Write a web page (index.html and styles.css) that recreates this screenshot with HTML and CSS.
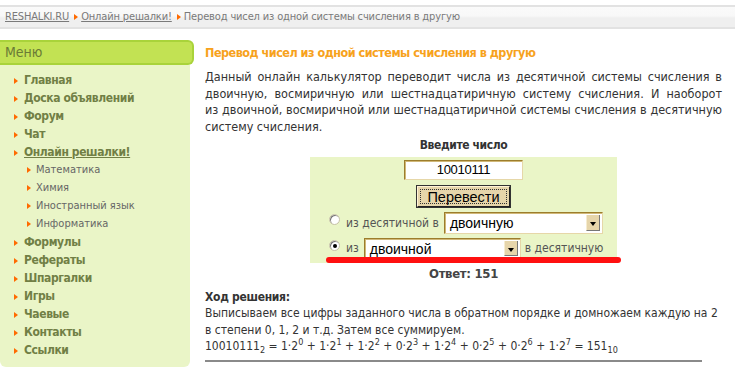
FILE: index.html
```html
<!DOCTYPE html>
<html lang="ru">
<head>
<meta charset="utf-8">
<title>Перевод чисел из одной системы счисления в другую</title>
<link rel="stylesheet" href="styles.css">
</head>
<body>
<div class="crumbs">
  <a href="#">RESHALKI.RU</a><span class="tri"></span><a href="#">Онлайн решалки!</a><span class="tri"></span><span>Перевод чисел из одной системы счисления в другую</span>
</div>
<div class="page">
  <aside class="side">
    <div class="side-head">Меню</div>
    <ul class="menu">
      <li><span class="tri"></span>Главная</li>
      <li><span class="tri"></span>Доска объявлений</li>
      <li><span class="tri"></span>Форум</li>
      <li><span class="tri"></span>Чат</li>
      <li><span class="tri"></span><u>Онлайн решалки!</u></li>
      <li class="sub"><span class="tri"></span>Математика</li>
      <li class="sub"><span class="tri"></span>Химия</li>
      <li class="sub"><span class="tri"></span>Иностранный язык</li>
      <li class="sub"><span class="tri"></span>Информатика</li>
      <li><span class="tri"></span>Формулы</li>
      <li><span class="tri"></span>Рефераты</li>
      <li><span class="tri"></span>Шпаргалки</li>
      <li><span class="tri"></span>Игры</li>
      <li><span class="tri"></span>Чаевые</li>
      <li><span class="tri"></span>Контакты</li>
      <li><span class="tri"></span>Ссылки</li>
    </ul>
  </aside>
  <main class="main">
    <h1 class="title">Перевод чисел из одной системы счисления в другую</h1>
    <p class="intro"><span class="jl">Данный онлайн калькулятор переводит числа из десятичной системы счисления в</span><span class="jl">двоичную, восмиричную или шестнадцатиричную систему счисления. И наоборот</span><span class="jl">из двоичной, восмиричной или шестнадцатиричной системы счисления в десятичную</span>систему счисления.</p>
    <div class="calc">
      <div class="enter">Введите число</div>
      <div class="box">
        <div class="num">10010111</div>
        <div class="btn"><span class="btn-in">Перевести</span></div>
        <div class="row row1"><span class="radio"></span><span class="lbl">из десятичной в</span><span class="sel s1"><span class="sel-t">двоичную</span><span class="arr"></span></span></div>
        <div class="row row2"><span class="radio on"></span><span class="lbl">из</span><span class="sel s2"><span class="sel-t">двоичной</span><span class="arr"></span></span><span class="lbl2">в десятичную</span></div>
        <div class="redline"></div>
      </div>
      <div class="answer">Ответ: 151</div>
    </div>
    <div class="sol-h">Ход решения:</div>
    <div class="sol">Выписываем все цифры заданного числа в обратном порядке и домножаем каждую на 2 в степени 0, 1, 2 и т.д. Затем все суммируем.<br>10010111<sub>2</sub> = 1·2<sup>0</sup> + 1·2<sup>1</sup> + 1·2<sup>2</sup> + 0·2<sup>3</sup> + 1·2<sup>4</sup> + 0·2<sup>5</sup> + 0·2<sup>6</sup> + 1·2<sup>7</sup> = 151<sub>10</sub></div>
    <div class="rule"></div>
  </main>
</div>
</body>
</html>
```
FILE: styles.css
```css
html, body { margin: 0; padding: 0; background: #fff; }
body {
  font-family: "DejaVu Sans", Verdana, sans-serif;
  font-stretch: semi-condensed;
  font-size: 12px;
  color: #333;
  width: 735px;
  height: 369px;
  overflow: hidden;
}
.tri {
  display: inline-block;
  width: 0; height: 0;
  border-left: 4px solid #ff6a00;
  border-top: 3.5px solid transparent;
  border-bottom: 3.5px solid transparent;
  vertical-align: 0px;
}
.crumbs {
  margin-top: 5px;
  height: 20px;
  line-height: 20px;
  border-top: 2px solid #e2e2e2;
  border-bottom: 2px solid #e2e2e2;
  background: linear-gradient(#fafafa, #f8f8f8 45%, #efefef 55%, #efefef);
  padding-left: 5px;
  color: #7a7a7a;
  font-size: 11px;
  letter-spacing: -0.15px;
  white-space: nowrap;
}
.crumbs a { color: #7a7a7a; text-decoration: underline; }
.crumbs .tri { margin: 0 3px 0 5px; border-left-width: 4px; border-top-width: 3px; border-bottom-width: 3px; }

.page { display: flex; margin-top: 11px; }
.side { width: 194px; flex: none; }
.side-head {
  height: 21px;
  line-height: 21px;
  background: #c2e253;
  border: 2px solid #a9d33a;
  border-left: none;
  border-radius: 0 6px 6px 0;
  padding-left: 5px;
  font-size: 14px;
  color: #6b7b36;
}
.menu {
  list-style: none;
  margin: 0;
  width: 190px;
  background: #eaf5c7;
  border-radius: 0 0 6px 6px;
  padding: 6px 0 0 0;
  box-sizing: border-box;
  height: 302px;
}
.menu li {
  height: 18px;
  line-height: 18px;
  padding-left: 14px;
  font-weight: bold;
  letter-spacing: -0.4px;
  color: #717f45;
  white-space: nowrap;
}
.menu li .tri { margin-right: 6px; }
.menu li.sub { padding-left: 27px; font-weight: normal; letter-spacing: 0; color: #666; font-size: 11px; }
.menu li.sub .tri { margin-right: 5px; }
.menu u { text-decoration: underline; }

.main { width: 517px; margin-left: 11px; flex: none; }
.title {
  margin: 4px 0 0 0;
  font-size: 12.5px;
  line-height: 17px;
  font-weight: bold;
  letter-spacing: -0.5px;
  color: #f7a21c;
}
.intro {
  margin: 8px 0 0 0;
  font-size: 12.5px;
  text-align: justify;
  line-height: 16.7px;
  white-space: nowrap;
}
.intro .jl { display: block; text-align-last: justify; }
.calc { display: flex; flex-direction: column; align-items: center; margin-top: 1px; }
.enter { font-weight: bold; line-height: 16px; letter-spacing: -0.4px; color: #333; }
.box {
  position: relative;
  width: 307px;
  height: 106px;
  margin-top: 4px;
  background: #eaf5c7;
  display: flex;
  flex-direction: column;
  align-items: center;
  padding-top: 3px;
  box-sizing: border-box;
}
.num {
  width: 119px; height: 20px;
  box-sizing: border-box;
  background: #fff;
  border: 1px solid;
  border-color: #9c7d2c #e6d7a8 #e6d7a8 #9c7d2c;
  box-shadow: inset 1px 1px 0 #d0b878;
  text-align: center;
  line-height: 18px;
  font-family: "Liberation Sans", Arial, sans-serif;
  font-size: 13px;
  letter-spacing: -0.3px;
  color: #000;
}
.btn {
  margin-top: 6px;
  width: 93px; height: 21px;
  box-sizing: border-box;
  background: #e6d5aa;
  border: 1px solid;
  border-color: #fff3d6 #222 #222 #fff3d6;
  box-shadow: 0 0 0 1px #333;
  padding: 2px;
}
.btn-in {
  display: block;
  height: 100%;
  box-sizing: border-box;
  border: 1px dotted #333;
  text-align: center;
  line-height: 14px;
  font-family: "Liberation Sans", Arial, sans-serif;
  font-size: 14.5px;
  color: #000;
}
.row { display: flex; align-items: center; align-self: flex-start; color: #555; font-size: 12px; padding-left: 19px; }
.row1 { margin-top: 5px; height: 22px; }
.row2 { margin-top: 4px; height: 21px; }
.radio {
  width: 11px; height: 11px;
  border-radius: 50%;
  background: #fff;
  border: 1px solid #c7c2a8;
  box-shadow: inset 1px 1px 0 #777;
  box-sizing: border-box;
  margin-top: -6px;
  position: relative;
  flex: none;
}
.radio.on::after {
  content: "";
  position: absolute;
  left: 3px; top: 3px;
  width: 4px; height: 4px;
  border-radius: 50%;
  background: #000;
}
.lbl { margin-left: 6px; margin-right: 5px; }
.lbl2 { margin-left: 4px; }
.sel {
  display: flex;
  height: 100%;
  box-sizing: border-box;
  background: #fff;
  border: 1px solid;
  border-color: #9c7d2c #e6d7a8 #e6d7a8 #9c7d2c;
  box-shadow: inset 1px 1px 0 #d0b878;
  padding: 2px;
  flex: none;
}
.s1 { width: 159px; }
.s2 { width: 157px; }
.sel-t {
  flex: 1;
  padding-left: 3px;
  line-height: 17px;
  font-family: "Liberation Sans", Arial, sans-serif;
  font-size: 14px;
  color: #000;
}
.arr {
  width: 14px;
  background: #e6d5aa;
  border-left: 1px solid #f6ecd0;
  border-right: 1px solid #777;
  border-bottom: 1px solid #777;
  box-sizing: border-box;
  position: relative;
}
.arr::after {
  content: "";
  position: absolute;
  left: 3px; top: 7px;
  border-top: 4px solid #000;
  border-left: 3.5px solid transparent;
  border-right: 3.5px solid transparent;
}
.redline {
  position: absolute;
  left: 16px;
  top: 100px;
  width: 295px;
  height: 6px;
  border-radius: 3px;
  background: #ff1010;
}
.answer { margin-top: 3px; font-weight: bold; font-size: 13px; letter-spacing: -0.3px; color: #444; line-height: 16px; }
.sol-h { margin-top: 7px; font-weight: bold; line-height: 16px; letter-spacing: -0.3px; color: #333; }
.sol { line-height: 16.7px; color: #333; }
.sol sup, .sol sub { font-size: 9px; line-height: 0; }
.rule { margin-top: 5px; width: 497px; height: 2px; background: #8a8a8a; }
```
